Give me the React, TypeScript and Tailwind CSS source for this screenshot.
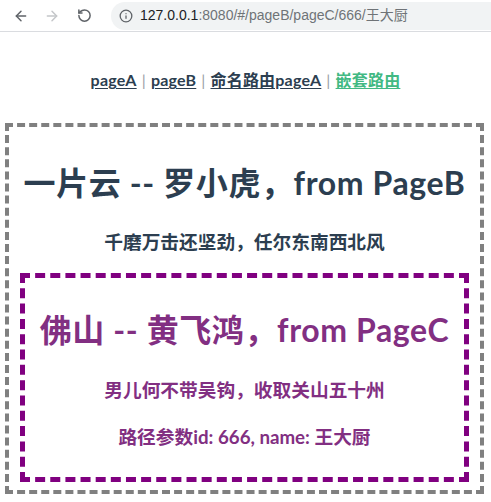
import { ArrowLeft, ArrowRight, RotateCw, Info } from "lucide-react";

const latin = "font-['Lato','Noto_Sans_CJK_SC',sans-serif]";

export default function App() {
  return (
    <div className={`min-h-[502px] bg-white ${latin}`}>
      {/* browser chrome */}
      <div className="flex h-[32px] items-center border-b border-[#dadce0] bg-white pl-[13px]">
        <ArrowLeft className="h-[16px] w-[16px] text-[#5f6368]" strokeWidth={2.2} />
        <ArrowRight className="ml-[15px] h-[16px] w-[16px] text-[#c4c6c9]" strokeWidth={2.2} />
        <RotateCw className="ml-[17px] h-[15px] w-[15px] -scale-x-100 text-[#5f6368]" strokeWidth={2.4} />
        <div className="ml-[19px] flex h-[28px] flex-1 items-center rounded-l-full bg-[#f1f3f4] pl-[8px]">
          <Info className="h-[14px] w-[14px] text-[#5f6368]" strokeWidth={2.2} />
          <span className="ml-[7px] font-['Liberation_Sans','Noto_Sans_CJK_SC',sans-serif] text-[14px] text-[#202124]">
            127.0.0.1<span className="text-[#6f7377]">:8080/#/pageB/pageC/666/王大厨</span>
          </span>
        </div>
      </div>

      {/* nav */}
      <div className="mt-[36px] flex h-[24px] items-center justify-center text-[16px] leading-[24px] font-bold tracking-[0.2px] text-[#2c3e50]">
        <a className="underline underline-offset-2">pageA</a>
        <span className="mx-[5px] font-normal text-[#9aa0a6]">|</span>
        <a className="underline underline-offset-2">pageB</a>
        <span className="mx-[5px] font-normal text-[#9aa0a6]">|</span>
        <a className="underline underline-offset-2">命名路由pageA</a>
        <span className="mx-[5px] font-normal text-[#9aa0a6]">|</span>
        <a className="text-[#42b983] underline underline-offset-2">嵌套路由</a>
      </div>

      {/* page B */}
      <div className="mt-[31px] ml-[5px] w-[479px] border-4 border-dashed border-[#808080] px-[11px] pb-[8px] text-center text-[#2c3e50]">
        <h1 className="mt-[36px] text-[32px] leading-[40px] font-bold tracking-[0.6px]">一片云 -- 罗小虎，from PageB</h1>
        <h3 className="mt-[27px] text-[18.72px] leading-[24px] font-bold">千磨万击还坚劲，任尔东南西北风</h3>

        {/* page C */}
        <div className="mt-[19px] border-[5px] border-dashed border-[#800080] pb-[28px] text-[#822f82]">
          <h1 className="mt-[32px] text-[32px] leading-[40px] font-bold tracking-[0.6px]">佛山 -- 黄飞鸿，from PageC</h1>
          <h3 className="mt-[28px] text-[18.72px] leading-[24px] font-bold">男儿何不带吴钩，收取关山五十州</h3>
          <h3 className="mt-[23px] text-[18.72px] leading-[24px] font-bold">路径参数id: 666, name: 王大厨</h3>
        </div>
      </div>
    </div>
  );
}
